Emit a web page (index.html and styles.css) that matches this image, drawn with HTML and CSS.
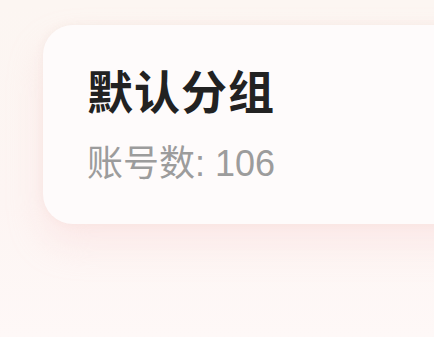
FILE: index.html
```html
<!DOCTYPE html>
<html lang="zh">
<head>
<meta charset="utf-8">
<link rel="stylesheet" href="styles.css">
</head>
<body>
<div class="page">
  <div class="card">
    <div class="title">默认分组</div>
    <div class="count">账号数: 106</div>
  </div>
</div>
</body>
</html>
```
FILE: styles.css
```css
html, body {
  margin: 0;
  padding: 0;
}
body {
  width: 434px;
  height: 337px;
  overflow: hidden;
  background: linear-gradient(180deg, #fcf6f2 0%, #fdf5f3 60%, #fef8f7 100%);
  font-family: "Liberation Sans", "Noto Sans CJK SC", sans-serif;
}
.page {
  width: 434px;
  height: 337px;
  overflow: hidden;
  padding: 25px 0 0 43px;
  box-sizing: border-box;
}
.card {
  width: 460px;
  height: 199px;
  box-sizing: border-box;
  padding: 34px 0 0 44px;
  background: #fefbfb;
  border-radius: 30px;
  box-shadow: 0 20px 34px rgba(250, 212, 212, 0.4), 0 0 10px rgba(240, 222, 216, 0.4);
}
.title {
  font-family: "Noto Sans CJK SC", sans-serif;
  font-size: 46px;
  font-weight: 700;
  letter-spacing: 1px;
  color: #222222;
  line-height: 60px;
}
.count {
  font-family: "Liberation Sans", "Noto Sans CJK SC", sans-serif;
  font-size: 36px;
  color: #9c9c9c;
  line-height: 44px;
  margin-top: 23px;
}
```
